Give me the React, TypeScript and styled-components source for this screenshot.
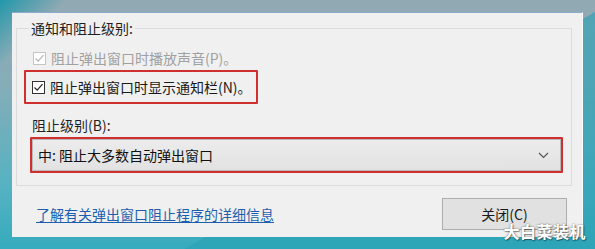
import styled, { createGlobalStyle } from 'styled-components';

const GlobalStyle = createGlobalStyle`
  html, body {
    margin: 0;
    padding: 0;
    width: 595px;
    height: 249px;
    overflow: hidden;
  }

  body {
    font-family: 'Noto Sans CJK SC', 'Noto Sans', sans-serif;
    font-size: 14px;
    color: #1f1f1f;
  }
`;

const Desktop = styled.div`
  position: relative;
  box-sizing: border-box;
  width: 595px;
  height: 249px;
  padding: 12px 12px 12px 12px;
  background:
    linear-gradient(135deg, rgba(20, 150, 170, 0.9) 0%, rgba(20, 150, 170, 0) 8%),
    linear-gradient(150deg, transparent 0 60%, rgba(40, 160, 180, 0.6) 60% 100%),
    linear-gradient(180deg, #92a9b3 0%, #84adb8 35%, #55b2c2 75%, #35abbd 100%);
`;

const Dialog = styled.div`
  box-sizing: border-box;
  width: 571px;
  height: 225px;
  display: flex;
  flex-direction: column;
  padding: 5px 10px 0 4px;
  background: #f0f0f0;
  border-top: 1px solid #8ea9cf;
  border-right: 1px solid #fafcfd;
`;

const Group = styled.fieldset`
  margin: 0;
  padding: 0 0 12px 7px;
  border: 1px solid #dcdcdc;
  display: flex;
  flex-direction: column;
  align-items: flex-start;
`;

const Legend = styled.legend`
  padding: 0 2px;
  margin-left: 5px;
  line-height: 20px;
  color: #1f1f1f;
`;

const OptionRow = styled.label<{ $disabled?: boolean }>`
  display: inline-flex;
  align-items: center;
  gap: 5px;
  height: 20px;
  color: ${(p) => (p.$disabled ? '#a0a0a0' : '#1a1a1a')};
`;

const PlainOption = styled(OptionRow)`
  margin: 10px 0 0 9px;
`;

const Highlight = styled.div`
  box-sizing: border-box;
  border: 2px solid #cf2f2f;
  border-radius: 1px;
`;

const HighlightOption = styled(Highlight)`
  display: flex;
  align-items: center;
  height: 34px;
  margin-top: 2px;
  padding: 0 4px 0 6px;
`;

const Box = styled.span<{ $disabled?: boolean }>`
  box-sizing: border-box;
  width: 13px;
  height: 13px;
  display: inline-flex;
  align-items: center;
  justify-content: center;
  background: #fff;
  border: 1px solid ${(p) => (p.$disabled ? '#c4c4c4' : '#333')};
`;

const FieldLabel = styled.div`
  margin: 11px 0 0 8px;
  line-height: 20px;
`;

const SelectFrame = styled(Highlight)`
  align-self: stretch;
  height: 36px;
  margin: 2px 8px 0 6px;
`;

const Select = styled.div`
  box-sizing: border-box;
  height: 100%;
  display: flex;
  align-items: center;
  justify-content: space-between;
  padding: 0 11px 0 5px;
  border: 1px solid #b9b9b9;
  background: linear-gradient(180deg, #ececec 0%, #e2e2e2 100%);
  color: #111;
`;

const Footer = styled.div`
  display: flex;
  align-items: center;
  justify-content: space-between;
  margin-top: 12px;
  padding: 0 0 0 20px;
`;

const Link = styled.a`
  color: #1d5fae;
  text-decoration: underline;
  text-underline-offset: 2px;
  cursor: pointer;
`;

const Button = styled.button`
  box-sizing: border-box;
  width: 125px;
  height: 32px;
  margin-right: 5px;
  font: inherit;
  color: #1a1a1a;
  background: #e1e1e1;
  border: 1px solid #adadad;
`;

const Watermark = styled.span`
  position: absolute;
  right: 9px;
  bottom: 9px;
  font-size: 16px;
  font-weight: 700;
  line-height: 18px;
  letter-spacing: 0.5px;
  color: #fff;
  text-shadow: 0 0 2px rgba(0, 0, 0, 0.55), 1px 1px 1px rgba(0, 0, 0, 0.35);
`;

const Check = ({ color }: { color: string }) => (
  <svg width="11" height="11" viewBox="0 0 11 11">
    <polyline points="1.5,5.5 4.2,8.2 9.5,2.2" fill="none" stroke={color} strokeWidth="1.2" />
  </svg>
);

const Chevron = () => (
  <svg width="11" height="7" viewBox="0 0 11 7">
    <polyline points="1,1 5.5,5.5 10,1" fill="none" stroke="#555" strokeWidth="1.2" />
  </svg>
);

export default function App() {
  return (
    <>
      <GlobalStyle />
      <Desktop>
        <Dialog>
          <Group>
            <Legend>通知和阻止级别:</Legend>
            <PlainOption $disabled>
              <Box $disabled>
                <Check color="#b5b5b5" />
              </Box>
              阻止弹出窗口时播放声音(P)。
            </PlainOption>
            <HighlightOption>
              <OptionRow>
                <Box>
                  <Check color="#222" />
                </Box>
                阻止弹出窗口时显示通知栏(N)。
              </OptionRow>
            </HighlightOption>
            <FieldLabel>阻止级别(B):</FieldLabel>
            <SelectFrame>
              <Select>
                <span>中: 阻止大多数自动弹出窗口</span>
                <Chevron />
              </Select>
            </SelectFrame>
          </Group>
          <Footer>
            <Link>了解有关弹出窗口阻止程序的详细信息</Link>
            <Button>关闭(C)</Button>
          </Footer>
        </Dialog>
        <Watermark>大白菜装机</Watermark>
      </Desktop>
    </>
  );
}
